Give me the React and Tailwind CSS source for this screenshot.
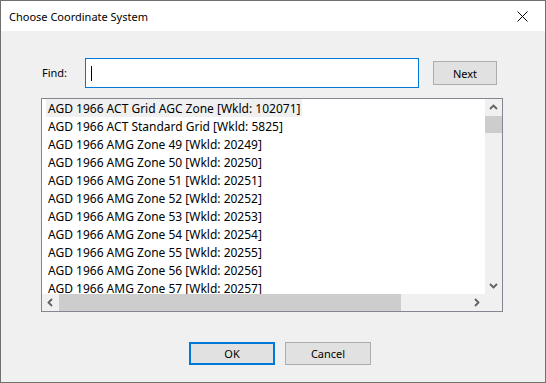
import React from "react";

const items = [
  "AGD 1966 ACT Grid AGC Zone [Wkld: 102071]",
  "AGD 1966 ACT Standard Grid [Wkld: 5825]",
  "AGD 1966 AMG Zone 49 [Wkld: 20249]",
  "AGD 1966 AMG Zone 50 [Wkld: 20250]",
  "AGD 1966 AMG Zone 51 [Wkld: 20251]",
  "AGD 1966 AMG Zone 52 [Wkld: 20252]",
  "AGD 1966 AMG Zone 53 [Wkld: 20253]",
  "AGD 1966 AMG Zone 54 [Wkld: 20254]",
  "AGD 1966 AMG Zone 55 [Wkld: 20255]",
  "AGD 1966 AMG Zone 56 [Wkld: 20256]",
  "AGD 1966 AMG Zone 57 [Wkld: 20257]",
];

function Chevron({ dir }) {
  const pts = {
    up: "1,5 4.5,1.5 8,5",
    down: "1,2 4.5,5.5 8,2",
    left: "5,1 1.5,4.5 5,8",
    right: "2,1 5.5,4.5 2,8",
  }[dir];
  const vertical = dir === "up" || dir === "down";
  return (
    <svg width={vertical ? 9 : 7} height={vertical ? 7 : 9} viewBox={vertical ? "0 0 9 7" : "0 0 7 9"}>
      <polyline points={pts} fill="none" stroke="#606060" strokeWidth="1.8" />
    </svg>
  );
}

export default function App() {
  return (
    <div
      className="w-[546px] h-[383px] border border-[#707070] bg-[#f0f0f0] flex flex-col text-[11px] text-black"
      style={{ fontFamily: '"Noto Sans", "Liberation Sans", sans-serif' }}
    >
      <div className="h-[30px] bg-white flex items-center justify-between pl-[8px] pr-[17px] shrink-0">
        <span className="leading-none">Choose Coordinate System</span>
        <svg width="11" height="11" viewBox="0 0 11 11">
          <path d="M0.5 0.5 L10.5 10.5 M10.5 0.5 L0.5 10.5" stroke="#000" strokeWidth="1" />
        </svg>
      </div>
      <div className="flex flex-col pl-[40px] pt-[27px]">
        <div className="flex items-center h-[30px]">
          <span className="w-[44px] pl-[1px]">Find:</span>
          <div className="w-[334px] h-[30px] border border-[#0078d7] bg-white flex items-center pl-[5px]">
            <div className="w-px h-[15px] bg-black" />
          </div>
          <button className="ml-[14px] w-[64px] h-[24px] border border-[#adadad] bg-[#e1e1e1] leading-none">
            Next
          </button>
        </div>
        <div className="mt-[10px] w-[462px] h-[214px] border border-[#828790] bg-white flex flex-col">
          <div className="flex flex-1 min-h-0">
            <div className="flex-1 overflow-hidden pl-[4px] text-[12px]">
              {items.map((t, i) => (
                <div key={i} className="h-[18px] flex">
                  <span
                    className={`px-[2px] h-[18px] pt-[2px] leading-[16px] whitespace-nowrap ${i === 0 ? "bg-[#f0f0f0]" : ""}`}
                  >
                    {t}
                  </span>
                </div>
              ))}
            </div>
            <div className="w-[17px] bg-[#f0f0f0] flex flex-col">
              <div className="h-[17px] flex items-center justify-center">
                <Chevron dir="up" />
              </div>
              <div className="h-[17px] bg-[#cdcdcd]" />
              <div className="flex-1" />
              <div className="h-[17px] flex items-center justify-center">
                <Chevron dir="down" />
              </div>
            </div>
          </div>
          <div className="h-[17px] flex bg-[#f0f0f0] shrink-0">
            <div className="w-[17px] flex items-center justify-center">
              <Chevron dir="left" />
            </div>
            <div className="w-[342px] bg-[#cdcdcd]" />
            <div className="flex-1" />
            <div className="w-[17px] flex items-center justify-center">
              <Chevron dir="right" />
            </div>
            <div className="w-[17px]" />
          </div>
        </div>
        <div className="mt-[30px] flex gap-[10px] pl-[148px]">
          <button className="w-[86px] h-[23px] border-2 border-[#0078d7] bg-[#e1e1e1] leading-none">OK</button>
          <button className="w-[86px] h-[23px] border border-[#adadad] bg-[#e1e1e1] leading-none">Cancel</button>
        </div>
      </div>
    </div>
  );
}
